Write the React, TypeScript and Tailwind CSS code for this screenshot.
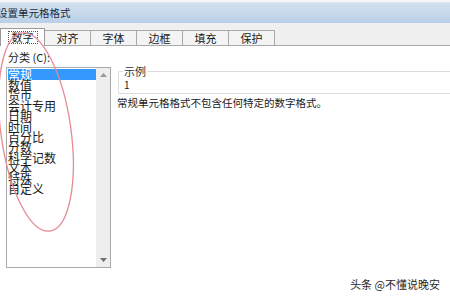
import React from 'react';

const TABS = ['数字', '对齐', '字体', '边框', '填充', '保护'];
const ITEMS = ['常规', '数值', '货币', '会计专用', '日期', '时间', '百分比', '分数', '科学记数', '文本', '特殊', '自定义'];

export default function App() {
  return (
    <div
      className="relative w-[450px] h-[300px] overflow-hidden bg-white text-[#1a1a1a]"
      style={{ fontFamily: "'Noto Sans CJK SC', 'Noto Sans', sans-serif" }}
    >
      <div className="h-[3px] bg-[#f4f6f8] border-b border-[#dfe5ec]" />
      <div className="h-[20px] flex items-center -ml-[3px] bg-gradient-to-b from-[#d3e1f0] to-[#b9d0e8] text-[10.5px] text-[#1c2a3a]">
        设置单元格格式
      </div>

      <div className="h-[23px] bg-[#f0f0f0] flex items-end pl-0 border-b border-[#a9a9a9]">
        {TABS.map((t, i) => (
          <div
            key={t}
            className={
              i === 0
                ? 'w-[45px] h-[18px] -mb-px bg-white border border-b-0 border-[#9a9a9a] flex items-center justify-center text-[11px]'
                : 'w-[46px] h-[15px] bg-[#f4f4f4] border border-l-0 border-b-0 border-[#a9a9a9] flex items-center justify-center text-[11px]'
            }
          >
            {i === 0 ? (
              <span className="px-[3px] leading-[11px] border border-dotted border-[#555]">{t}</span>
            ) : (
              t
            )}
          </div>
        ))}
      </div>

      <div className="flex">
        <div className="w-[112px] pl-[6px] pt-[4px]">
          <div className="text-[11px] leading-[14px] pl-[2px]">分类 (C):</div>
          <div className="mt-[3px] h-[201px] w-[105px] border border-[#aaaaaa] flex">
            <div className="flex-1 pt-[1px] pl-px">
              {ITEMS.map((it, i) => (
                <div
                  key={it}
                  className={
                    i === 0
                      ? 'h-[11px] bg-[#3399ff] text-white text-[12px] leading-[11px] whitespace-nowrap'
                      : 'h-[10.4px] text-[12px] leading-[10.4px] whitespace-nowrap'
                  }
                >
                  {it}
                </div>
              ))}
            </div>
            <div className="w-[14px] bg-[#eeeeee] flex flex-col items-center justify-between py-[5px]">
              <svg width="7" height="4" viewBox="0 0 7 4">
                <path d="M0 4 L3.5 0 L7 4 Z" fill="#9a9a9a" />
              </svg>
              <svg width="7" height="4" viewBox="0 0 7 4">
                <path d="M0 0 L3.5 4 L7 0 Z" fill="#707070" />
              </svg>
            </div>
          </div>
        </div>

        <div className="flex-1 pt-[25px] pl-[6px]">
          <div className="relative h-[23px] border border-[#dcdcdc] border-r-0 rounded-l-[2px] -mr-px">
            <span className="absolute -top-[8px] left-[4px] bg-white px-[1px] text-[11px] leading-[14px] text-[#333]">
              示例
            </span>
            <div className="pt-[7px] pl-[5px] text-[10px] leading-[12px]">1</div>
          </div>
          <div className="mt-[3px] text-[10.5px] leading-[12px] -ml-[1px]">常规单元格格式不包含任何特定的数字格式。</div>
        </div>
      </div>

      <svg className="absolute left-0 top-0 pointer-events-none" width="450" height="300">
        <ellipse
          cx="36"
          cy="132"
          rx="35"
          ry="100"
          transform="rotate(-8 36 132)"
          fill="none"
          stroke="#e58a93"
          strokeWidth="1.3"
        />
      </svg>

      <div className="absolute right-[10px] top-[278px] text-[11px] leading-[12px] text-[#2a2a2a]">头条 @不懂说晚安</div>
    </div>
  );
}
